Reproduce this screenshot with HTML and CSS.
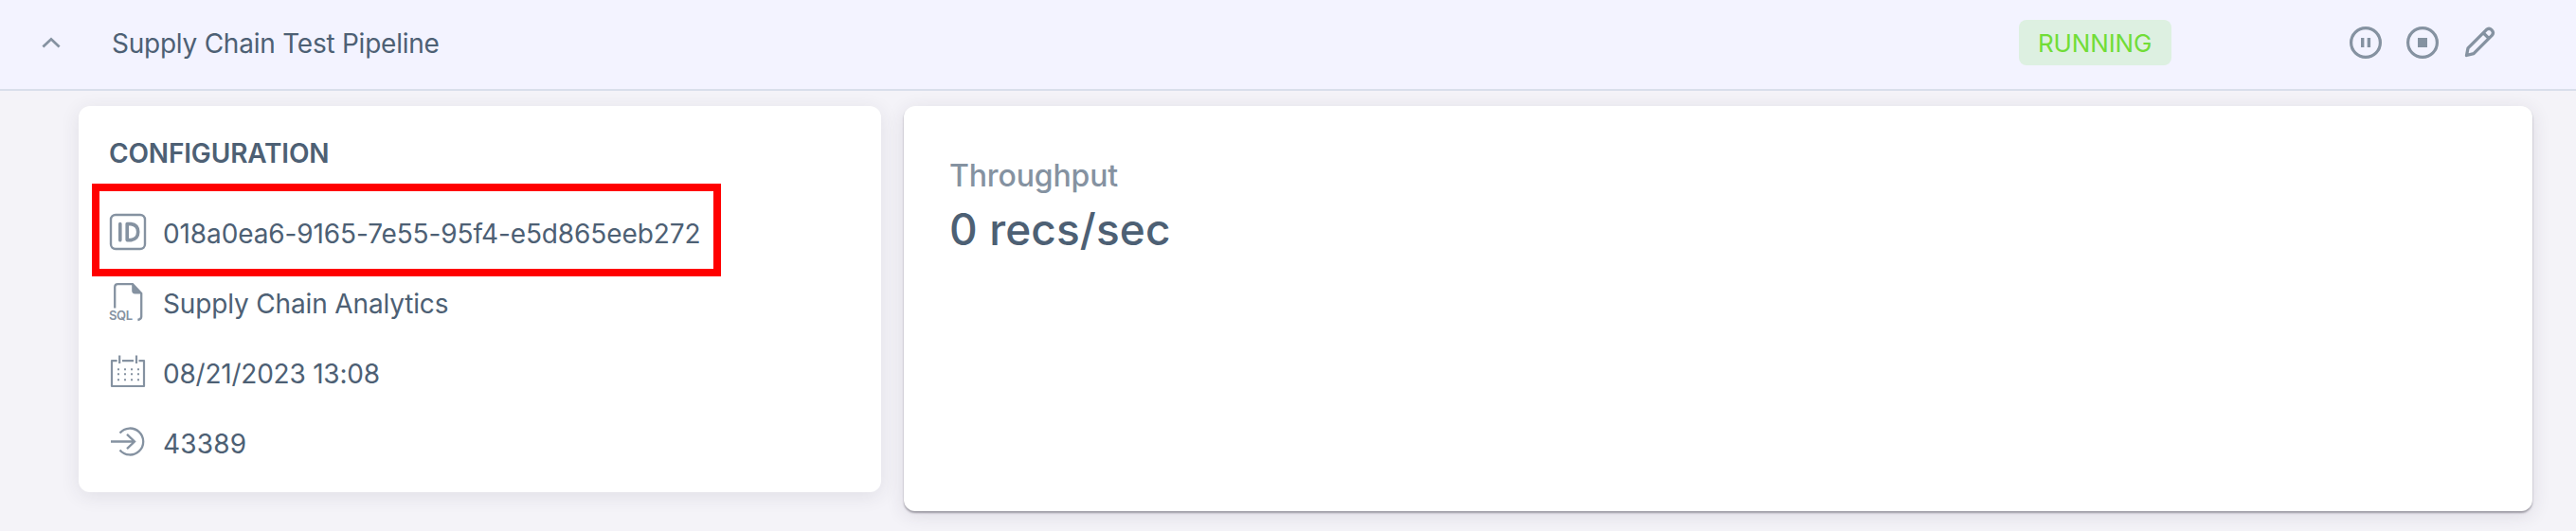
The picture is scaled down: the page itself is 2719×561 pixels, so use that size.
FILE: index.html
```html
<!DOCTYPE html>
<html lang="en">
<head>
<meta charset="utf-8">
<title>Supply Chain Test Pipeline</title>
<link rel="stylesheet" href="styles.css">
</head>
<body>
<header class="bar">
  <svg class="chevron" viewBox="0 0 24 24"><path d="M5 15.2 12 8.6 19 15.2" fill="none" stroke="currentColor" stroke-width="2.6" stroke-linecap="square"/></svg>
  <h1 class="title">Supply Chain Test Pipeline</h1>
  <span class="chip">RUNNING</span>
  <nav class="actions">
    <svg viewBox="0 0 34 34"><circle cx="17" cy="17" r="15.4" fill="none" stroke="currentColor" stroke-width="3.2"/><path d="M12 12h3.4v10H12zM18.7 12h3.4v10h-3.4z" fill="currentColor"/></svg>
    <svg viewBox="0 0 34 34"><circle cx="17" cy="17" r="15.4" fill="none" stroke="currentColor" stroke-width="3.2"/><path d="M12 12h10v10H12z" fill="currentColor"/></svg>
    <svg viewBox="0 0 34 34"><g fill="none" stroke="currentColor" stroke-width="3.3" stroke-linejoin="round"><path d="M3.5 30.5 5 22.8 24.5 3.3Q27.3 1 30 3.7T30.5 9.2L11 28.7ZM21.2 6.8l5.9 5.8"/></g></svg>
  </nav>
</header>
<main class="content">
  <section class="card config">
    <h2 class="heading">CONFIGURATION</h2>
    <ul class="rows">
      <li class="row marked">
        <svg viewBox="0 0 40 40"><rect x="2" y="2" width="36" height="36" rx="5" fill="none" stroke="currentColor" stroke-width="2.4"/><path d="M11.8 11.5v17.2M19.2 11.6v17h4.1q7.4-1 7.4-8.5t-7.4-8.5z" fill="none" stroke="currentColor" stroke-width="3.6" stroke-linecap="round" stroke-linejoin="round"/></svg>
        <span class="uuid">018a0ea6-9165-7e55-95f4-e5d865eeb272</span>
      </li>
      <li class="row">
        <svg viewBox="0 0 40 40"><path d="M6.2 26.5V4.2Q6.2 1.1 9.3 1.1H25L34.2 11V35.5Q34.2 38.3 30.4 39" fill="none" stroke="currentColor" stroke-width="2.3"/><path d="M24.2.5 35 11.4H27.5Q24.2 11.4 24.2 8z" fill="currentColor"/><text class="tag" x="0" y="39.3" textLength="25">SQL</text></svg>
        <span class="program">Supply Chain Analytics</span>
      </li>
      <li class="row">
        <svg viewBox="0 0 40 40"><path d="M8.6 8.2H3V35H37V8.2H31.5M14 8.2H26M11.2 2.5V11M29 2.5V11" fill="none" stroke="currentColor" stroke-width="2.2" stroke-linejoin="round"/><path d="M9 17.3H33M9 22.3H33M9 28.3H33" stroke="currentColor" stroke-width="2" stroke-dasharray="2 5"/></svg>
        <span class="date">08/21/2023 13:08</span>
      </li>
      <li class="row">
        <svg viewBox="0 0 40 40"><path d="M11.5 10.5A14 14 0 1 1 11.5 28.5M2 19.5H27M19 11.8 27 19.5 19 27.2" fill="none" stroke="currentColor" stroke-width="2.3"/></svg>
        <span class="port">43389</span>
      </li>
    </ul>
  </section>
  <section class="card metrics">
    <p class="label">Throughput</p>
    <p class="value">0 recs/sec</p>
  </section>
</main>
</body>
</html>
```
FILE: styles.css
```css
*, *::before { box-sizing: border-box; margin: 0; padding: 0; }
body { background: #f4f3f8; color: #4d6074; font: 400 28px/40px Inter, "Liberation Sans", sans-serif; height: 561px; overflow: hidden; }
svg { display: block; color: #8592a1; overflow: visible; flex: none; }
.bar { display: flex; align-items: center; height: 96px; padding: 0 85px 4px 41px; background: #f3f3ff; border-bottom: 2px solid #d9dfeb; }
.chevron { width: 26px; height: 26px; margin-right: 51px; }
.title { flex: 1; font-size: 28px; font-weight: 400; letter-spacing: -.24px; padding-top: 1px; }
.chip { width: 161px; height: 48px; margin-right: 188px; padding-left: 20px; border-radius: 8px; background: #ddf0e1; color: #71dd37; font-size: 26px; line-height: 49px; letter-spacing: -.15px; }
.actions { display: flex; gap: 26px; }
.actions svg { width: 34px; height: 34px; }
.content { display: flex; align-items: flex-start; gap: 24px; padding: 16px 46px 0 83px; }
.card { background: #fff; border-radius: 12px; }
.config { width: 847px; height: 408px; padding: 30px 32px; box-shadow: 0 4px 20px rgba(50, 45, 65, .1); }
.heading { font-size: 28px; line-height: 40px; font-weight: 600; letter-spacing: -.15px; }
.rows { list-style: none; margin-top: 28px; }
.row { position: relative; display: flex; align-items: center; gap: 17px; height: 74px; }
.row svg { width: 40px; height: 40px; margin-bottom: 4px; }
.uuid { letter-spacing: -.11px; }
.program { letter-spacing: -.15px; }
.date { letter-spacing: -.22px; }
.port { letter-spacing: .2px; }
.marked::before { content: ""; position: absolute; left: -18px; top: -16px; width: 664px; height: 98px; border: 8px solid #f00; }
.tag { font-family: Inter, sans-serif; font-size: 13px; font-weight: 600; fill: #8592a1; }
.metrics { flex: 1; height: 428px; padding: 54px 48px; box-shadow: 0 2px 2px rgba(50, 45, 60, .4), 0 4px 20px rgba(50, 45, 65, .12); }
.label { color: #8592a1; font-size: 32px; line-height: 40px; font-weight: 500; letter-spacing: -.15px; }
.value { font-size: 46px; line-height: 62px; font-weight: 500; margin-top: 5px; letter-spacing: .1px; }
```
